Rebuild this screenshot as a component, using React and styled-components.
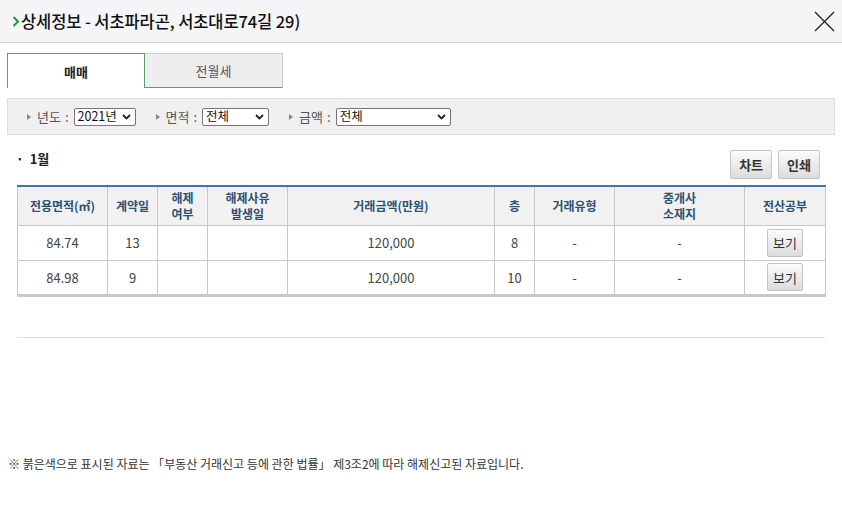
import React from "react";
import styled, { createGlobalStyle } from "styled-components";

const GlobalStyle = createGlobalStyle`
  html, body {
    margin: 0;
    padding: 0;
    background: #fff;
  }
  body {
    font-family: "Noto Sans CJK KR", "Noto Sans", sans-serif;
    color: #222;
  }
`;

const Page = styled.div`
  width: 842px;
  height: 507px;
  position: relative;
  overflow: hidden;
`;

const Header = styled.div`
  height: 43px;
  background: #f5f5f7;
  border-bottom: 1px solid #d2d2d2;
  display: flex;
  align-items: center;
  justify-content: space-between;
  padding: 0 6px 0 12px;
  box-sizing: border-box;
`;

const Title = styled.h1`
  margin: 0;
  display: flex;
  align-items: center;
  font-size: 16.5px;
  font-weight: 500;
  color: #111;
  letter-spacing: -0.1px;
  line-height: 1;
`;

const CloseButton = styled.button`
  border: 0;
  background: none;
  padding: 0;
  width: 24px;
  height: 24px;
  display: flex;
  align-items: center;
  justify-content: center;
  cursor: pointer;
`;

const Body = styled.div`
  padding: 10px 7px 0;
`;

const Tabs = styled.div`
  display: flex;
`;

const Tab = styled.div`
  width: 138px;
  height: 35px;
  box-sizing: border-box;
  display: flex;
  align-items: center;
  justify-content: center;
  font-size: 13px;
  font-weight: ${p => (p.active ? 700 : 400)};
  color: ${p => (p.active ? "#222" : "#555")};
  background: ${p => (p.active ? "#fff" : "#eeeeee")};
  border: 1px solid ${p => (p.active ? "#5f9d6c" : "#cccccc")};
  border-bottom: ${p => (p.active ? "none" : "1px solid #5f9d6c")};
  border-left: ${p => (p.active ? "1px solid #5f9d6c" : "none")};
`;

const FilterBar = styled.div`
  margin-top: 10px;
  height: 37px;
  box-sizing: border-box;
  background: #f0f0f0;
  border: 1px solid #dddddd;
  display: flex;
  align-items: center;
  padding-left: 19px;
  gap: 20px;
`;

const Filter = styled.div`
  display: flex;
  align-items: center;
  font-size: 13px;
  color: #555;
`;

const Bullet = styled.span`
  width: 0;
  height: 0;
  border-top: 3.5px solid transparent;
  border-bottom: 3.5px solid transparent;
  border-left: 4px solid #888;
  margin-right: 6px;
`;

const Colon = styled.span`
  margin: 0 5px 0 4px;
`;

const Select = styled.div`
  width: ${p => p.w}px;
  height: 18px;
  box-sizing: border-box;
  border: 1px solid #767676;
  border-radius: 2px;
  background: #fff;
  display: flex;
  align-items: center;
  justify-content: space-between;
  padding: 0 4px 0 3px;
  font-size: 12.5px;
  color: #111;
  line-height: 1;
`;

const SectionRow = styled.div`
  display: flex;
  align-items: center;
  justify-content: space-between;
  margin-top: 15px;
  padding: 0 15px 0 9px;
  height: 29px;
`;

const MonthLabel = styled.div`
  font-size: 13px;
  font-weight: 700;
  color: #222;
  align-self: flex-start;
  margin-top: -1px;
  span {
    margin-right: 6px;
  }
`;

const ButtonGroup = styled.div`
  display: flex;
  gap: 6px;
`;

const GrayButton = styled.button`
  font-family: inherit;
  height: ${p => (p.small ? 28 : 29)}px;
  padding: 0 ${p => (p.small ? 5 : 8)}px;
  border: 1px solid #c4c4c4;
  border-radius: 2px;
  background: linear-gradient(#fbfbfb, #dcdcdc);
  font-size: 13px;
  font-weight: ${p => (p.small ? 400 : 700)};
  color: #333;
  cursor: pointer;
`;

const TableWrap = styled.div`
  margin: 6px 10px 0;
`;

const Table = styled.table`
  width: 808px;
  border-collapse: collapse;
  table-layout: fixed;
  border-top: 2px solid #3b78a8;
  border-bottom: 3px solid #c9c9c9;
`;

const Th = styled.th`
  height: 39px;
  box-sizing: border-box;
  background: #f1f1f1;
  border: 1px solid #c8c8c8;
  border-top: none;
  font-size: 12px;
  font-weight: 700;
  color: #2d5073;
  line-height: 16px;
  padding: 0;
`;

const Td = styled.td`
  height: 35px;
  box-sizing: border-box;
  border: 1px solid #c8c8c8;
  text-align: center;
  font-size: 13px;
  color: #444;
  padding: 0;
`;

const Divider = styled.hr`
  margin: 40px 10px 0;
  border: 0;
  border-top: 1px solid #dddddd;
`;

const Footnote = styled.p`
  margin: 117px 0 0 1px;
  font-size: 12px;
  color: #333;
`;

const Chevron = () => (
  <svg width="9" height="6" viewBox="0 0 9 6">
    <polyline points="1,1 4.5,4.5 8,1" fill="none" stroke="#222" strokeWidth="1.8" />
  </svg>
);

const columns = [
  { w: 90, label: ["전용면적(㎡)"] },
  { w: 50, label: ["계약일"] },
  { w: 50, label: ["해제", "여부"] },
  { w: 80, label: ["해제사유", "발생일"] },
  { w: 207, label: ["거래금액(만원)"] },
  { w: 40, label: ["층"] },
  { w: 80, label: ["거래유형"] },
  { w: 130, label: ["중개사", "소재지"] },
  { w: 81, label: ["전산공부"] }
];

const rows = [
  { area: "84.74", day: "13", price: "120,000", floor: "8" },
  { area: "84.98", day: "9", price: "120,000", floor: "10" }
];

const filters = [
  { label: "년도", value: "2021년", w: 62 },
  { label: "면적", value: "전체", w: 67 },
  { label: "금액", value: "전체", w: 115 }
];

export default function App() {
  return (
    <Page>
      <GlobalStyle />
      <Header>
        <Title>
          <svg width="8" height="11" viewBox="0 0 8 11" style={{ marginRight: 1 }}>
            <polyline points="1.5,1 6,5.5 1.5,10" fill="none" stroke="#1f9a3c" strokeWidth="2" />
          </svg>
          상세정보 - 서초파라곤, 서초대로74길 29)
        </Title>
        <CloseButton aria-label="닫기">
          <svg width="21" height="21" viewBox="0 0 21 21">
            <path d="M1 1 L20 20 M20 1 L1 20" stroke="#222" strokeWidth="1.3" />
          </svg>
        </CloseButton>
      </Header>
      <Body>
        <Tabs>
          <Tab active>매매</Tab>
          <Tab>전월세</Tab>
        </Tabs>
        <FilterBar>
          {filters.map(f => (
            <Filter key={f.label}>
              <Bullet />
              {f.label}
              <Colon>:</Colon>
              <Select w={f.w}>
                {f.value}
                <Chevron />
              </Select>
            </Filter>
          ))}
        </FilterBar>
        <SectionRow>
          <MonthLabel>
            <span>·</span>1월
          </MonthLabel>
          <ButtonGroup>
            <GrayButton>차트</GrayButton>
            <GrayButton>인쇄</GrayButton>
          </ButtonGroup>
        </SectionRow>
        <TableWrap>
          <Table>
            <colgroup>
              {columns.map((c, i) => (
                <col key={i} style={{ width: c.w }} />
              ))}
            </colgroup>
            <thead>
              <tr>
                {columns.map((c, i) => (
                  <Th key={i}>
                    {c.label.map((l, j) => (
                      <div key={j}>{l}</div>
                    ))}
                  </Th>
                ))}
              </tr>
            </thead>
            <tbody>
              {rows.map((r, i) => (
                <tr key={i}>
                  <Td>{r.area}</Td>
                  <Td>{r.day}</Td>
                  <Td />
                  <Td />
                  <Td>{r.price}</Td>
                  <Td>{r.floor}</Td>
                  <Td>-</Td>
                  <Td>-</Td>
                  <Td>
                    <GrayButton small>보기</GrayButton>
                  </Td>
                </tr>
              ))}
            </tbody>
          </Table>
        </TableWrap>
        <Divider />
        <Footnote>
          ※ 붉은색으로 표시된 자료는 「부동산 거래신고 등에 관한 법률」 제3조2에 따라 해제신고된 자료입니다.
        </Footnote>
      </Body>
    </Page>
  );
}
